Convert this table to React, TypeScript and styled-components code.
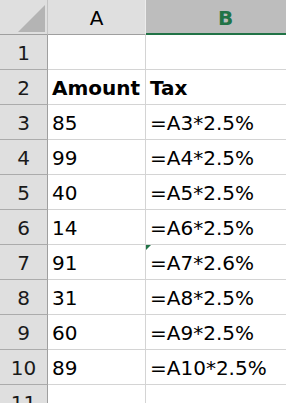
import React from 'react';
import styled, { createGlobalStyle, css } from 'styled-components';

const GlobalStyle = createGlobalStyle`
  html, body {
    margin: 0;
    padding: 0;
    background: #ffffff;
    overflow: hidden;
  }
  body {
    font-family: "DejaVu Sans", "Liberation Sans", sans-serif;
  }
`;

const Sheet = styled.div`
  display: grid;
  grid-template-columns: 48px 98px 160px;
  grid-auto-rows: 35px;
  width: 306px;
  font-size: 20px;
  color: #000;
`;

const Corner = styled.div`
  position: relative;
  box-sizing: border-box;
  background: #dfdfdf;
  border-right: 1px solid #c4c4c4;
  border-bottom: 1px solid #9f9f9f;
`;

const Triangle = styled.svg`
  position: absolute;
  left: 18px;
  top: 5px;
`;

const ColHead = styled.div<{ $active?: boolean }>`
  box-sizing: border-box;
  display: flex;
  align-items: flex-end;
  justify-content: center;
  padding-bottom: 4px;
  background: #dfdfdf;
  border-right: 1px solid #ececec;
  border-bottom: 1px solid #9f9f9f;
  line-height: 23px;
  ${(p) =>
    p.$active &&
    css`
      background: #bdbdbd;
      color: #217346;
      font-weight: bold;
      border-bottom: 2px solid #217346;
      padding-bottom: 3px;
    `}
`;

const RowHead = styled.div`
  box-sizing: border-box;
  display: flex;
  align-items: flex-end;
  justify-content: center;
  padding-bottom: 4px;
  background: #dfdfdf;
  border-right: 1px solid #9f9f9f;
  border-bottom: 1px solid #ababab;
  line-height: 23px;
  color: #1a1a1a;
`;

const Cell = styled.div<{ $bold?: boolean }>`
  position: relative;
  box-sizing: border-box;
  display: flex;
  align-items: flex-end;
  padding: 0 0 4px 4px;
  border-right: 1px solid #d4d4d4;
  border-bottom: 1px solid #d4d4d4;
  line-height: 23px;
  white-space: nowrap;
  font-weight: ${(p) => (p.$bold ? 'bold' : 'normal')};
`;

const ErrorFlag = styled.span`
  position: absolute;
  left: 0;
  top: 0;
  width: 0;
  height: 0;
  border-top: 5px solid #217346;
  border-right: 5px solid transparent;
`;

type Row = { a: string; b: string; bold?: boolean; flag?: boolean };

const rows: Row[] = [
  { a: '', b: '' },
  { a: 'Amount', b: 'Tax', bold: true },
  { a: '85', b: '=A3*2.5%' },
  { a: '99', b: '=A4*2.5%' },
  { a: '40', b: '=A5*2.5%' },
  { a: '14', b: '=A6*2.5%' },
  { a: '91', b: '=A7*2.6%', flag: true },
  { a: '31', b: '=A8*2.5%' },
  { a: '60', b: '=A9*2.5%' },
  { a: '89', b: '=A10*2.5%' },
  { a: '', b: '' },
];

const App = () => {
  return (
    <>
      <GlobalStyle />
      <Sheet>
        <Corner>
          <Triangle width="27" height="27" viewBox="0 0 27 27">
            <polygon points="27,0 27,27 0,27" fill="#b4b4b4" />
          </Triangle>
        </Corner>
        <ColHead>A</ColHead>
        <ColHead $active>B</ColHead>
        {rows.map((r, i) => (
          <React.Fragment key={i}>
            <RowHead>{i + 1}</RowHead>
            <Cell $bold={r.bold}>{r.a}</Cell>
            <Cell $bold={r.bold}>
              {r.flag && <ErrorFlag />}
              {r.b}
            </Cell>
          </React.Fragment>
        ))}
      </Sheet>
    </>
  );
};

export default App;
